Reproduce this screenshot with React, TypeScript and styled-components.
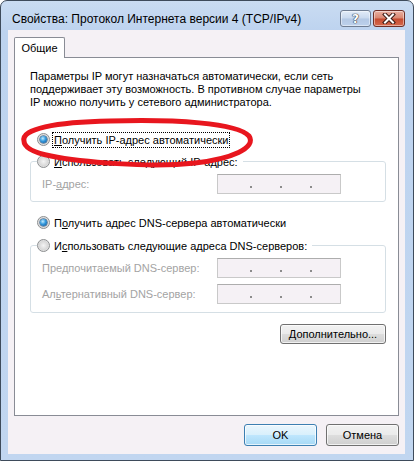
import styled, { createGlobalStyle } from "styled-components";

const GlobalStyle = createGlobalStyle`
  html, body {
    margin: 0;
    padding: 0;
    background: #ffffff;
  }
  body {
    font-family: "Liberation Sans", Arial, sans-serif;
    font-size: 11px;
    color: #000;
  }
`;

const Window = styled.div`
  width: 414px;
  height: 461px;
  box-sizing: border-box;
  border: 1px solid #3e4b5b;
  border-radius: 7px 7px 0 0;
  background: linear-gradient(#cadcf2, #bdd3ef 30px, #c1d6f0);
  display: flex;
  flex-direction: column;
  overflow: hidden;
`;

const TitleBar = styled.div`
  height: 29px;
  display: flex;
  align-items: flex-start;
  padding: 0 8px 0 11px;
`;

const Title = styled.div`
  flex: 1;
  margin-top: 11px;
  font-size: 12px;
  line-height: 15px;
  color: #000;
`;

const CaptionButtons = styled.div`
  display: flex;
  gap: 2px;
  margin-top: 9px;
`;

const CaptionButton = styled.div<{ $close?: boolean }>`
  width: ${(p) => (p.$close ? 32 : 31)}px;
  height: 17px;
  box-sizing: border-box;
  border-radius: 3px;
  border: 1px solid ${(p) => (p.$close ? "#6e2e26" : "#6f7d92")};
  background: ${(p) =>
    p.$close
      ? "linear-gradient(#eab0a2, #d98670 48%, #c54a2f 52%, #d5694d)"
      : "linear-gradient(#e2ecf8, #c9d9ee 48%, #b3c8e4 52%, #bdd1ec)"};
  box-shadow: inset 0 0 0 1px rgba(255, 255, 255, 0.45);
  display: flex;
  align-items: center;
  justify-content: center;
`;

const HelpGlyph = styled.span`
  font-family: "DejaVu Sans", sans-serif;
  font-weight: bold;
  font-size: 12px;
  line-height: 12px;
  color: #fff;
  text-shadow: 0 0 1px #2c3440, 0 0 1px #2c3440, 0 0 1px #2c3440;
`;

const Client = styled.div`
  flex: 1;
  margin: 0 8px 6px 7px;
  padding: 7px 6px 0 6px;
  background: #f5f1f5;
  display: flex;
  flex-direction: column;
`;

const TabStrip = styled.div`
  height: 20px;
  display: flex;
`;

const Tab = styled.div`
  position: relative;
  z-index: 1;
  width: 51px;
  height: 21px;
  box-sizing: border-box;
  border: 1px solid #898c95;
  border-bottom: none;
  border-radius: 2px 2px 0 0;
  background: #fff;
  display: flex;
  align-items: center;
  justify-content: center;
  padding-bottom: 1px;
`;

const Panel = styled.div`
  position: relative;
  height: 359px;
  box-sizing: border-box;
  border: 1px solid #898c95;
  background: #fff;
  padding: 0 12px 0 15px;
  display: flex;
  flex-direction: column;
`;

const Description = styled.p`
  margin: 12px 0 0;
  line-height: 13px;
`;

const OptionRow = styled.label<{ $top: number }>`
  display: flex;
  align-items: center;
  height: 17px;
  margin-top: ${(p) => p.$top}px;
  padding-left: 7px;
`;

const Radio = styled.span<{ $checked?: boolean }>`
  position: relative;
  flex: none;
  width: 13px;
  height: 13px;
  box-sizing: border-box;
  border-radius: 50%;
  border: 1px solid #8c8e90;
  background: radial-gradient(circle at 50% 50%, #f4f4f4 0, #d8d8d8 55%, #f8f8f8 100%);
  &::after {
    content: "";
    display: ${(p) => (p.$checked ? "block" : "none")};
    position: absolute;
    left: 2px;
    top: 2px;
    width: 7px;
    height: 7px;
    border-radius: 50%;
    background: radial-gradient(circle at 40% 35%, #c4ecff 0, #3399dd 45%, #0d4d8f 100%);
    box-shadow: 0 0 0 0.5px #1b4a78;
  }
`;

const OptionText = styled.span<{ $focus?: boolean }>`
  margin-left: 3px;
  padding: 1px 1px 0;
  line-height: 13px;
  outline: ${(p) => (p.$focus ? "1px dotted #000" : "none")};
`;

const Group = styled.fieldset<{ $top: number }>`
  margin: ${(p) => p.$top}px 0 0;
  padding: 0 6px 0 6px;
  border: 1px solid #d5dfe5;
  border-radius: 3px;
  min-width: 0;
`;

const Legend = styled.legend`
  display: flex;
  align-items: center;
  height: 15px;
  padding: 0 4px 0 0;
`;

const FieldRow = styled.div<{ $top: number; $bottom?: number }>`
  display: flex;
  align-items: center;
  height: 20px;
  padding-left: 5px;
  margin-top: ${(p) => p.$top}px;
  margin-bottom: ${(p) => p.$bottom ?? 0}px;
`;

const FieldLabel = styled.span`
  width: 175px;
  color: #a3a3a3;
`;

const IpBox = styled.div`
  width: 124px;
  height: 20px;
  box-sizing: border-box;
  border: 1px solid #c9c9c9;
  border-top-color: #adadad;
  background: #f5f1f5;
  display: flex;
  align-items: flex-end;
  gap: 28px;
  padding: 0 0 5px 32px;
`;

const Dot = styled.span`
  width: 2px;
  height: 2px;
  background: #8c8c8c;
`;

const Button = styled.div<{ $default?: boolean; $w: number; $h: number }>`
  width: ${(p) => p.$w}px;
  height: ${(p) => p.$h}px;
  box-sizing: border-box;
  border-radius: 3px;
  border: 1px solid ${(p) => (p.$default ? "#3c7fb1" : "#707070")};
  background: ${(p) =>
    p.$default
      ? "linear-gradient(#eaf6fd, #d9f0fc 48%, #bee6fd 52%, #a7d9f5)"
      : "linear-gradient(#f2f2f2, #ebebeb 48%, #dddddd 52%, #cfcfcf)"};
  box-shadow: inset 0 0 0 1px rgba(255, 255, 255, 0.7);
  display: flex;
  align-items: center;
  justify-content: center;
`;

const AdvancedButton = styled(Button)`
  align-self: flex-end;
  margin-top: 11px;
`;

const Footer = styled.div`
  display: flex;
  justify-content: flex-end;
  gap: 9px;
  margin-top: 8px;
`;

const Scribble = styled.svg`
  position: absolute;
  left: 0;
  top: 57px;
  width: 250px;
  height: 70px;
  pointer-events: none;
`;

function IpField() {
  return (
    <IpBox>
      <Dot />
      <Dot />
      <Dot />
    </IpBox>
  );
}

export default function App() {
  return (
    <>
      <GlobalStyle />
      <Window>
        <TitleBar>
          <Title>Свойства: Протокол Интернета версии 4 (TCP/IPv4)</Title>
          <CaptionButtons>
            <CaptionButton>
              <HelpGlyph>?</HelpGlyph>
            </CaptionButton>
            <CaptionButton $close>
              <svg width="14" height="11" viewBox="0 0 14 11">
                <path d="M3 1.5 L11 9.5 M11 1.5 L3 9.5" stroke="#3a1a14" strokeWidth="4" strokeLinecap="square" />
                <path d="M3 1.5 L11 9.5 M11 1.5 L3 9.5" stroke="#fff" strokeWidth="2" strokeLinecap="square" />
              </svg>
            </CaptionButton>
          </CaptionButtons>
        </TitleBar>
        <Client>
          <TabStrip>
            <Tab>Общие</Tab>
          </TabStrip>
          <Panel>
            <Description>
              Параметры IP могут назначаться автоматически, если сеть
              <br />
              поддерживает эту возможность. В противном случае параметры
              <br />
              IP можно получить у сетевого администратора.
            </Description>

            <OptionRow $top={22}>
              <Radio $checked />
              <OptionText $focus>
                <u>П</u>олучить IP-адрес автоматически
              </OptionText>
            </OptionRow>

            <Group $top={6}>
              <Legend>
                <Radio />
                <OptionText>
                  <u>И</u>спользовать следующий IP-адрес:
                </OptionText>
              </Legend>
              <FieldRow $top={5} $bottom={7}>
                <FieldLabel>
                  IP-<u>а</u>дрес:
                </FieldLabel>
                <IpField />
              </FieldRow>
            </Group>

            <OptionRow $top={12}>
              <Radio $checked />
              <OptionText>
                П<u>о</u>лучить адрес DNS-сервера автоматически
              </OptionText>
            </OptionRow>

            <Group $top={7}>
              <Legend>
                <Radio />
                <OptionText>
                  И<u>с</u>пользовать следующие адреса DNS-серверов:
                </OptionText>
              </Legend>
              <FieldRow $top={5}>
                <FieldLabel>
                  Пре<u>д</u>почитаемый DNS-сервер:
                </FieldLabel>
                <IpField />
              </FieldRow>
              <FieldRow $top={6} $bottom={8}>
                <FieldLabel>
                  Ал<u>ь</u>тернативный DNS-сервер:
                </FieldLabel>
                <IpField />
              </FieldRow>
            </Group>

            <AdvancedButton $w={106} $h={20}>
              <span>
                <u>Д</u>ополнительно...
              </span>
            </AdvancedButton>

            <Scribble viewBox="0 0 250 70">
              <path
                d="M9 26 C 6 14, 40 7, 95 6 C 160 4, 222 8, 234 21 C 242 33, 216 44, 180 48 C 135 53, 65 47, 36 41 C 16 37, 9 32, 9 26 Z"
                fill="none"
                stroke="#e8161e"
                strokeWidth="5"
                strokeLinejoin="round"
              />
            </Scribble>
          </Panel>
          <Footer>
            <Button $default $w={73} $h={22}>
              OK
            </Button>
            <Button $w={73} $h={22}>
              Отмена
            </Button>
          </Footer>
        </Client>
      </Window>
    </>
  );
}
